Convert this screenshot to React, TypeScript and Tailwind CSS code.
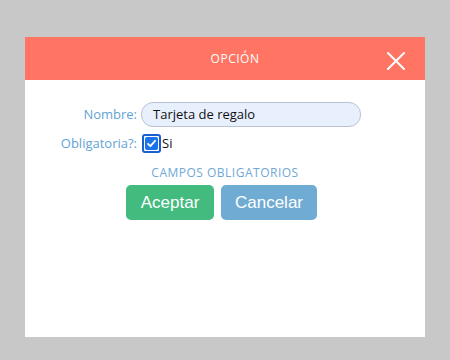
import React from "react";

export default function App() {
  return (
    <div className="w-[450px] h-[360px] bg-[#c8c8c8] pt-[37px] pl-[25px]" style={{ fontFamily: '"Open Sans", sans-serif' }}>
      <div className="w-[400px] h-[300px] bg-white flex flex-col">
        <div className="h-[43px] bg-[#ff7462] flex items-center relative">
          <div className="w-full text-center pl-[20px] text-[12px] font-medium text-white tracking-[0.5px]">OPCIÓN</div>
          <svg className="absolute left-[362px] top-[15px]" width="18" height="18" viewBox="0 0 18 18">
            <path d="M1 1 L17 17 M17 1 L1 17" stroke="white" strokeWidth="2" strokeLinecap="square" />
          </svg>
        </div>
        <div className="pt-[22px] flex flex-col">
          <div className="flex items-center h-[25px]">
            <div className="w-[112px] text-right text-[13px] text-[#64a3d4]">Nombre:</div>
            <div className="ml-[4px] w-[220px] h-[25px] rounded-[12px] bg-[#e8f0fe] border border-[#b9c3d3] flex items-center pl-[11px] text-[13px] text-[#111]">
              Tarjeta de regalo
            </div>
          </div>
          <div className="flex items-center h-[19px] mt-[7px]">
            <div className="w-[112px] text-right text-[13px] text-[#64a3d4]">Obligatoria?:</div>
            <div className="ml-[5px] w-[19px] h-[19px] rounded-[3px] border-2 border-[#1a5fd0] flex items-center justify-center">
              <div className="w-[13px] h-[13px] rounded-[2px] bg-[#1a73e8] flex items-center justify-center">
                <svg width="11" height="11" viewBox="0 0 11 11">
                  <path d="M2 5.8 L4.4 8.2 L9 2.8" stroke="white" strokeWidth="1.8" fill="none" strokeLinecap="round" strokeLinejoin="round" />
                </svg>
              </div>
            </div>
            <div className="ml-[1px] text-[13px] text-[#111]">Si</div>
          </div>
          <div className="mt-[11px] text-center text-[12px] font-medium text-[#6fa9d4] tracking-[0.5px]">CAMPOS OBLIGATORIOS</div>
          <div className="flex mt-[3px] pl-[101px] gap-[7px]" style={{ fontFamily: '"Liberation Sans", sans-serif' }}>
            <div className="w-[88px] h-[35px] rounded-[5px] bg-[#43bb7f] text-white text-[17px] flex items-center justify-center">Aceptar</div>
            <div className="w-[96px] h-[35px] rounded-[5px] bg-[#70abd4] text-white text-[17px] flex items-center justify-center">Cancelar</div>
          </div>
        </div>
      </div>
    </div>
  );
}
